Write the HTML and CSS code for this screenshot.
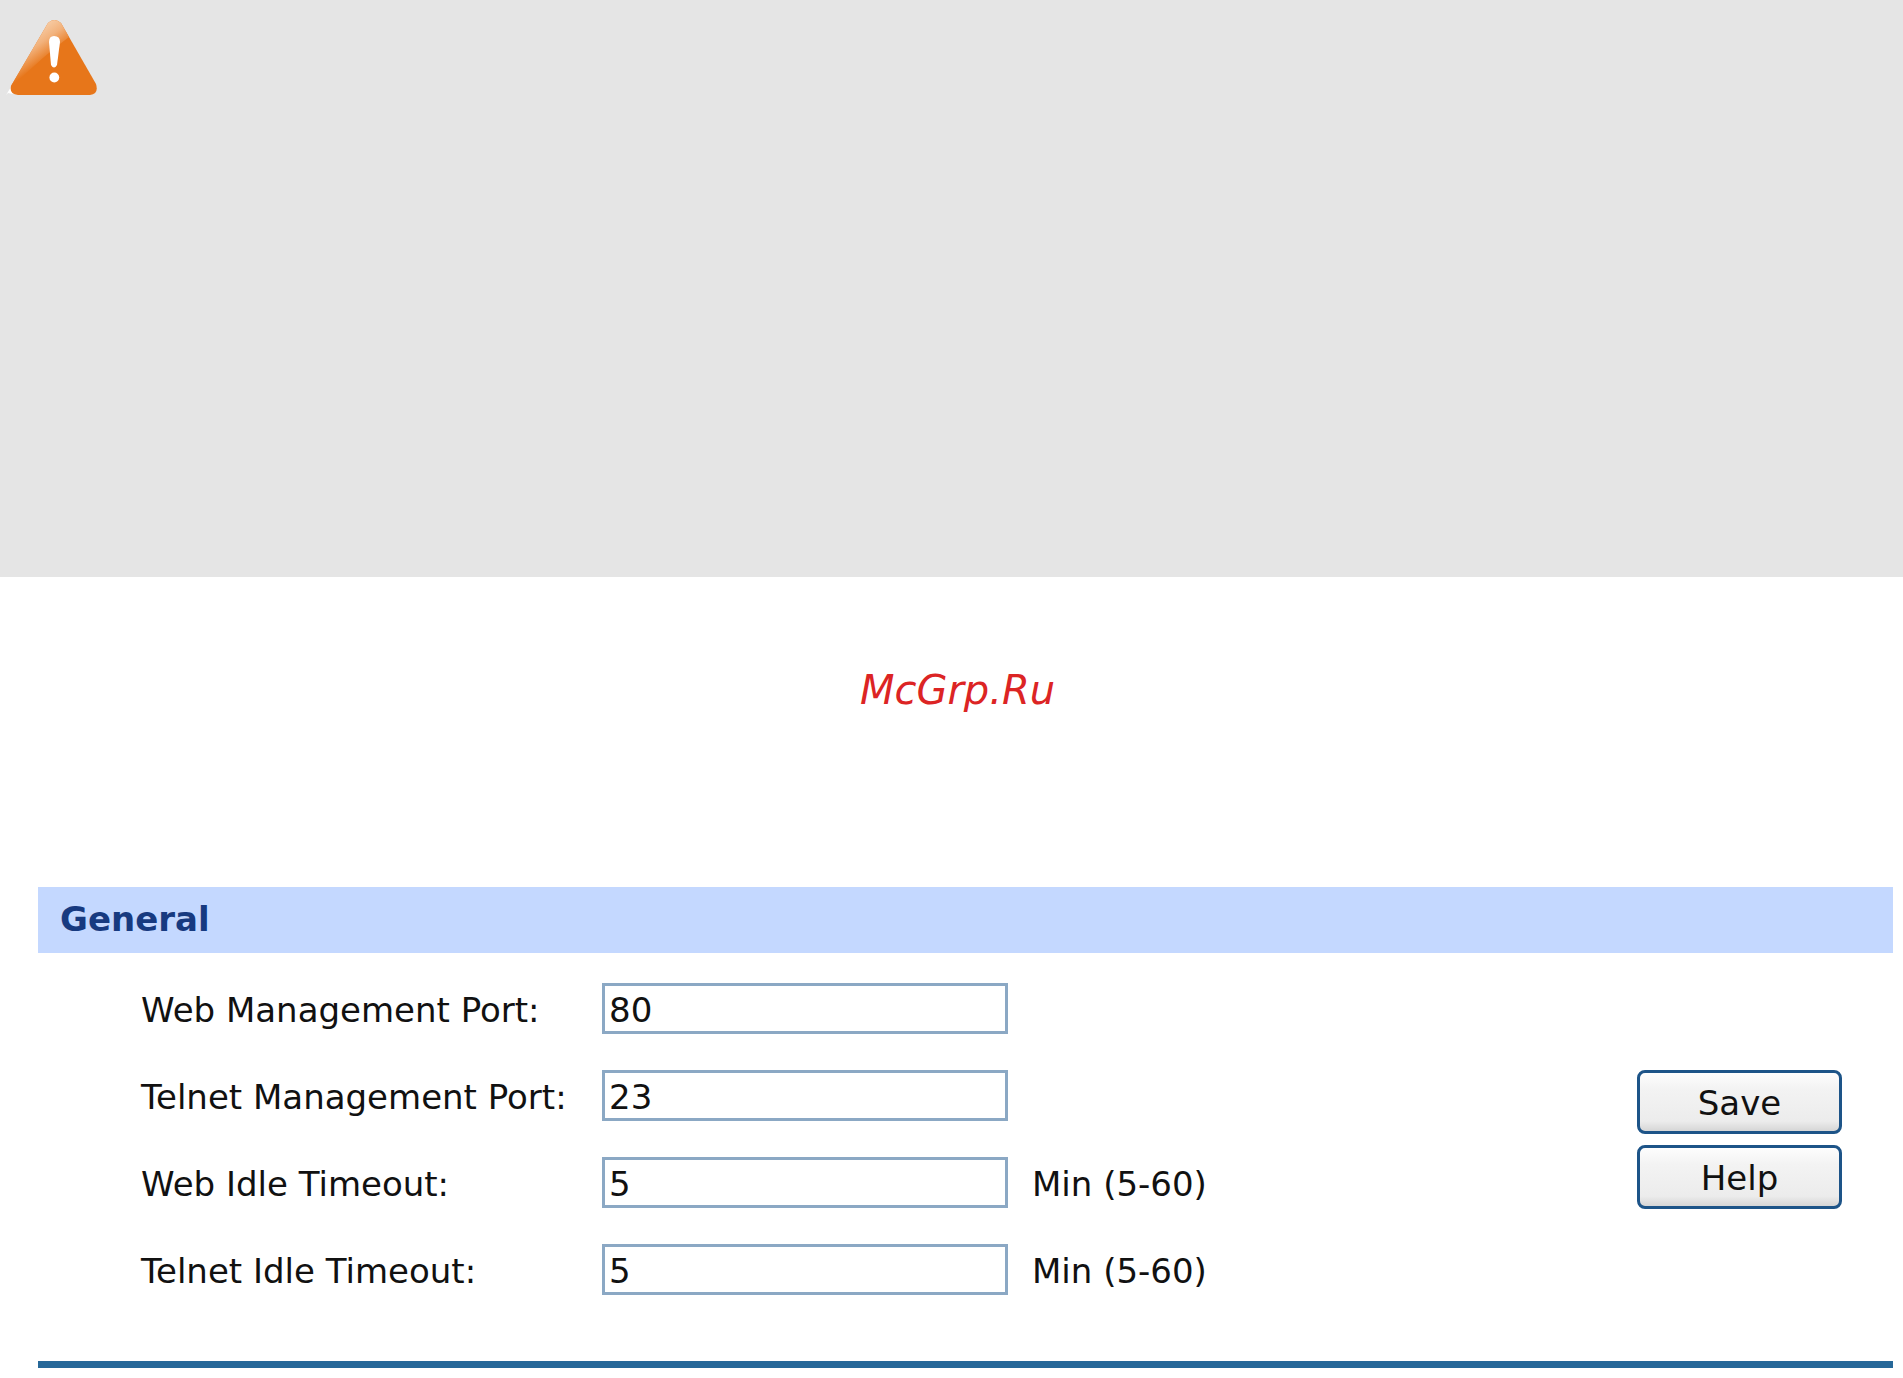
FILE: index.html
```html
<!DOCTYPE html>
<html lang="en">
<head>
  <meta charset="UTF-8">
  <meta name="viewport" content="width=device-width, initial-scale=1.0">
  <title>General</title>
  <link rel="stylesheet" href="styles.css">
</head>
<body>
  <div class="notice">
    <svg class="notice-icon" width="96" height="80" viewBox="4 18 96 80" role="img" aria-label="Warning">
      <defs>
        <linearGradient id="shine" gradientUnits="userSpaceOnUse" x1="32" y1="28" x2="52" y2="56">
          <stop offset="0" stop-color="#f8d3b0"/>
          <stop offset="0.5" stop-color="#f2b27c"/>
          <stop offset="1" stop-color="#e7761a"/>
        </linearGradient>
      </defs>
      <path d="M6 95 L11 87 L13 94 L8 93 Z" fill="#fff"/>
      <path d="M48 23 Q54 17 61 23 L96 84 Q99 94 90 95 H18 Q9 94 11 86 Z" fill="#e7761a"/>
      <path d="M48 23 Q54 17 61 23 L69 37 Q42 57 14 85 L11 86 Z" fill="url(#shine)"/>
      <path d="M49 42 Q49 36 54 36 Q60 36 60 42 L57 65 Q54 70 51 65 Z" fill="#fff"/>
      <circle cx="54.3" cy="77.5" r="4.9" fill="#fff"/>
    </svg>
  </div>

  <p class="watermark">McGrp.Ru</p>

  <form class="panel">
    <h1>General</h1>
    <div class="panel-body">
      <div class="fields">
        <div class="row">
          <label for="webPort">Web Management Port:</label>
          <input type="text" id="webPort" value="80">
        </div>
        <div class="row">
          <label for="telnetPort">Telnet Management Port:</label>
          <input type="text" id="telnetPort" value="23">
        </div>
        <div class="row">
          <label for="webIdle">Web Idle Timeout:</label>
          <input type="text" id="webIdle" value="5">
          <span class="hint">Min (5-60)</span>
        </div>
        <div class="row">
          <label for="telnetIdle">Telnet Idle Timeout:</label>
          <input type="text" id="telnetIdle" value="5">
          <span class="hint">Min (5-60)</span>
        </div>
      </div>
      <div class="actions">
        <button type="button">Save</button>
        <button type="button">Help</button>
      </div>
    </div>
  </form>
</body>
</html>
```

FILE: styles.css
```css
* {
  box-sizing: border-box;
}

body {
  margin: 0;
  background-color: #fff;
  color: #111;
  font-family: "DejaVu Sans", Verdana, sans-serif;
  font-size: 34px;
  line-height: 40px;
}

.notice {
  min-height: 577px;
  padding: 18px 4px;
  background-color: #e5e5e5;
}

.notice-icon {
  display: block;
}

.watermark {
  margin: 0;
  padding: 90px 0 173px 12px;
  color: #dc2424;
  font-size: 40px;
  font-style: italic;
  line-height: 47px;
  text-align: center;
}

.panel {
  margin: 0 10px 0 38px;
  border-bottom: 7px solid #266899;
}

.panel h1 {
  margin: 0;
  padding: 12px 22px 14px;
  background-color: #c4d8ff;
  color: #173a80;
  font-size: 34px;
  line-height: 40px;
}

.panel-body {
  display: flex;
  justify-content: space-between;
  align-items: center;
  padding: 30px 51px 66px 103px;
}

.fields {
  display: flex;
  flex-direction: column;
  gap: 36px;
}

.row {
  display: flex;
}

.row label {
  width: 461px;
  padding-top: 7px;
}

.row input {
  width: 406px;
  height: 51px;
  padding: 2px 4px 0;
  border: 3px solid #8ba8c4;
  border-radius: 0;
  background-color: #fff;
  color: inherit;
  font: inherit;
}

.hint {
  padding: 7px 0 0 24px;
}

.actions {
  display: flex;
  flex-direction: column;
  gap: 11px;
}

.actions button {
  width: 205px;
  height: 64px;
  padding: 3px 0 0;
  border: 3px solid #1d5488;
  border-radius: 8px;
  background: linear-gradient(#fff, #f3f3f3 30%, #ececec 80%, #cfcfcf) border-box;
  color: inherit;
  font: inherit;
}
```
